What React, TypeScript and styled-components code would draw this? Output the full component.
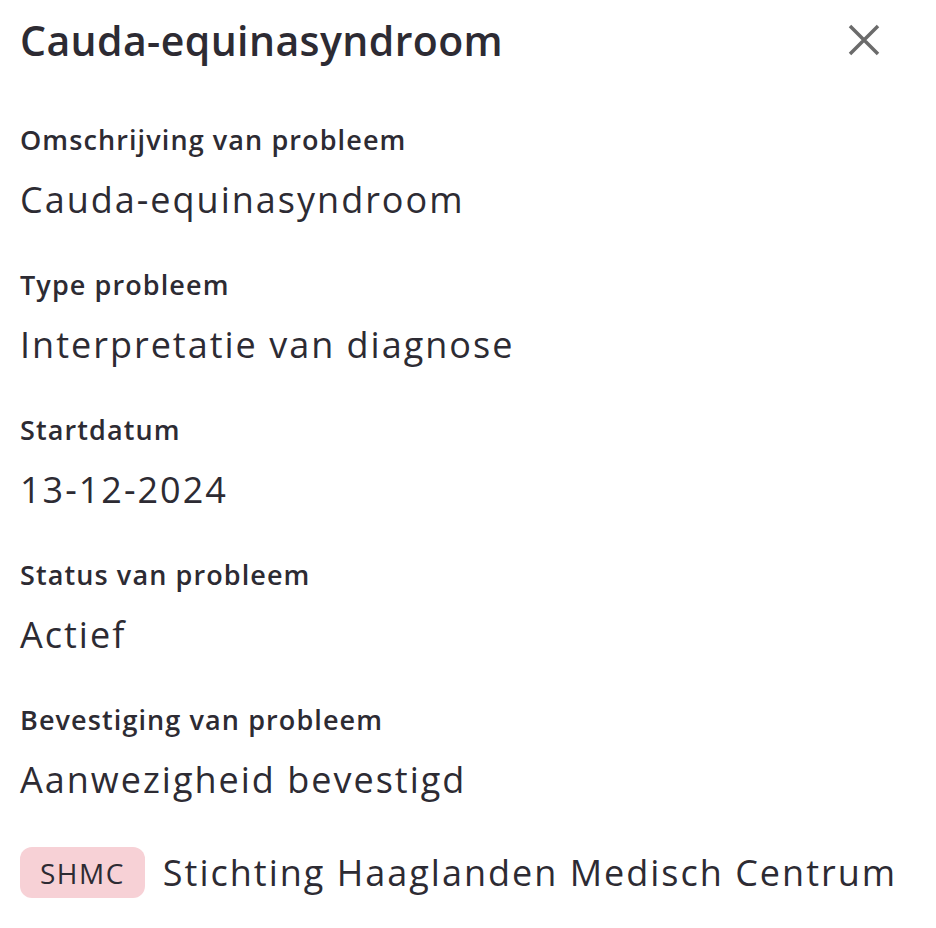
import React from 'react';
import styled, { createGlobalStyle } from 'styled-components';

const GlobalStyle = createGlobalStyle`
  html, body {
    margin: 0;
    padding: 0;
    background: #ffffff;
  }
  body {
    font-family: "Open Sans", "Noto Sans", sans-serif;
    color: #2d2b33;
  }
`;

const Panel = styled.div`
  width: 936px;
  min-height: 928px;
  box-sizing: border-box;
  padding: 14px 20px 20px 20px;
  display: flex;
  flex-direction: column;
`;

const Header = styled.div`
  display: flex;
  align-items: center;
  justify-content: space-between;
  height: 52px;
  margin-bottom: 54px;
`;

const Title = styled.h1`
  margin: 0;
  font-size: 41px;
  font-weight: 600;
  line-height: 52px;
  letter-spacing: 0.4px;
  color: #2d2b33;
`;

const CloseButton = styled.button`
  border: none;
  background: transparent;
  padding: 0;
  margin-right: 36px;
  width: 32px;
  height: 32px;
  display: flex;
  align-items: center;
  justify-content: center;
  cursor: pointer;
`;

const Fields = styled.div`
  display: flex;
  flex-direction: column;
  gap: 45px;
`;

const Field = styled.div`
  display: flex;
  flex-direction: column;
  gap: 20px;
`;

const Label = styled.div`
  font-size: 27px;
  font-weight: 600;
  line-height: 40px;
  letter-spacing: 1.1px;
  color: #2d2b33;
`;

const Value = styled.div`
  font-size: 36px;
  font-weight: 400;
  line-height: 40px;
  letter-spacing: 2px;
  color: #2d2b33;
`;

const Source = styled.div`
  display: flex;
  align-items: center;
  gap: 18px;
  margin-top: 47px;
`;

const Badge = styled.span`
  display: inline-flex;
  align-items: center;
  justify-content: center;
  height: 51px;
  padding: 0 20px;
  border-radius: 12px;
  background: #f7d1d6;
  font-size: 28px;
  letter-spacing: 1.5px;
  color: #2d2b33;
`;

const fields = [
  { label: 'Omschrijving van probleem', value: 'Cauda-equinasyndroom' },
  { label: 'Type probleem', value: 'Interpretatie van diagnose' },
  { label: 'Startdatum', value: '13-12-2024' },
  { label: 'Status van probleem', value: 'Actief' },
  { label: 'Bevestiging van probleem', value: 'Aanwezigheid bevestigd' },
];

export default function App() {
  return (
    <>
      <GlobalStyle />
      <Panel>
        <Header>
          <Title>Cauda-equinasyndroom</Title>
          <CloseButton aria-label="Sluiten">
            <svg width="32" height="32" viewBox="0 0 32 32">
              <path d="M2 2 L30 30 M30 2 L2 30" stroke="#6b6b6b" strokeWidth="3.5" strokeLinecap="butt" />
            </svg>
          </CloseButton>
        </Header>
        <Fields>
          {fields.map(f => (
            <Field key={f.label}>
              <Label>{f.label}</Label>
              <Value>{f.value}</Value>
            </Field>
          ))}
        </Fields>
        <Source>
          <Badge>SHMC</Badge>
          <Value>Stichting Haaglanden Medisch Centrum</Value>
        </Source>
      </Panel>
    </>
  );
}
